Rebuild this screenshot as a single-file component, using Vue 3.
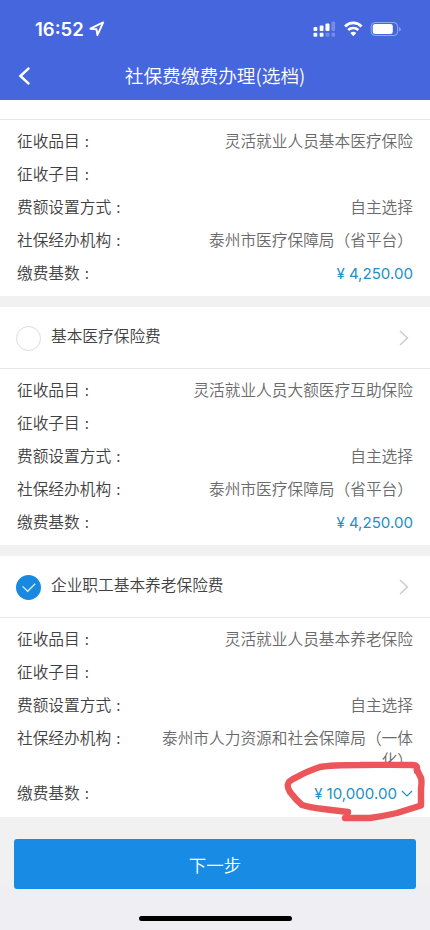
<script setup>
const cards = [
  {
    title: '', checked: false, amount: '4,250.00',
    item: '灵活就业人员基本医疗保险', agency: '泰州市医疗保障局（省平台）'
  },
  {
    title: '基本医疗保险费', checked: false, amount: '4,250.00',
    item: '灵活就业人员大额医疗互助保险', agency: '泰州市医疗保障局（省平台）'
  },
  {
    title: '企业职工基本养老保险费', checked: true, amount: '10,000.00', selectable: true,
    item: '灵活就业人员基本养老保险', agency: '泰州市人力资源和社会保障局（一体化）'
  }
]
</script>

<template>
  <div class="screen">
    <header class="top">
      <div class="status">
        <div class="time">
          <span>16:52</span>
          <svg class="loc" width="16" height="16" viewBox="0 0 16 16"><path d="M1.4 7.7 14.2 1.4 8.4 14.2 7.5 8.3Z" fill="none" stroke="#fff" stroke-width="1.9" stroke-linejoin="round" /></svg>
        </div>
        <svg class="indicators" width="88" height="16" viewBox="0 0 88 16" fill="#fff">
          <rect x="0.5" y="6" width="3.8" height="4" rx="1" />
          <rect x="6.7" y="4.6" width="3.8" height="5.4" rx="1" />
          <rect x="12.5" y="2.6" width="4" height="7.4" rx="1" />
          <rect x="18.5" y="0.6" width="3.6" height="9.4" rx="1" opacity=".25" />
          <rect x="0.5" y="11.8" width="3.8" height="4" rx="1" />
          <rect x="6.7" y="11.8" width="3.8" height="4" rx="1" />
          <rect x="12.5" y="11.8" width="4" height="4" rx="1" opacity=".25" />
          <rect x="18.5" y="11.8" width="3.6" height="4" rx="1" opacity=".25" />
          <g transform="translate(.9 0)">
            <path d="M31.2 5.4a11.5 11.5 0 0 1 16.4 0" fill="none" stroke="#fff" stroke-width="2.8" />
            <path d="M34.3 9a7.2 7.2 0 0 1 10.2 0" fill="none" stroke="#fff" stroke-width="2.5" />
            <path d="M36.4 12.1a4.4 4.4 0 0 1 6 0L39.4 15.2Z" />
          </g>
          <g transform="translate(.8 .5)">
            <rect x="57.4" y="1" width="26.4" height="13" rx="3.8" fill="none" stroke="#fff" stroke-opacity=".45" />
            <rect x="59" y="2.5" width="20" height="10" rx="2.2" />
            <path d="M85.3 5.5v4.4a2.3 2.3 0 0 0 0-4.4Z" opacity=".45" />
          </g>
        </svg>
      </div>
      <div class="nav">
        <svg class="back" width="14" height="20" viewBox="0 0 14 20"><path d="M11.2 1.8 2.4 10l8.8 8.2" fill="none" stroke="#fff" stroke-width="2.5" /></svg>
        <h1>社保费缴费办理(选档)</h1>
      </div>
    </header>

    <main>
      <section v-for="(c, i) in cards" :key="i" class="card">
        <div class="head" :class="{ cut: !c.title }">
          <template v-if="c.title">
            <span class="check" :class="{ on: c.checked }">
              <svg v-if="c.checked" width="24" height="24" viewBox="0 0 24 24"><path d="m5.5 11.4 5.2 4.9 7.5-7.5" fill="none" stroke="#d9f1ff" stroke-width="1.3" /></svg>
            </span>
            <span class="title">{{ c.title }}</span>
            <svg class="arrow" width="10" height="16" viewBox="0 0 10 16"><path d="m1 1 7.5 7L1 15" fill="none" stroke="#ccc" stroke-width="1.5" /></svg>
          </template>
        </div>
        <div class="rows">
          <div class="row"><span class="label">征收品目<i>:</i></span><span class="value">{{ c.item }}</span></div>
          <div class="row"><span class="label">征收子目<i>:</i></span></div>
          <div class="row"><span class="label">费额设置方式<i>:</i></span><span class="value">自主选择</span></div>
          <div class="row"><span class="label">社保经办机构<i>:</i></span><span class="value">{{ c.agency }}</span></div>
          <div class="row">
            <span class="label">缴费基数<i>:</i></span>
            <span class="value money">
              <span class="yen">¥</span><span>{{ c.amount }}</span>
              <svg v-if="c.selectable" class="down" width="12" height="8" viewBox="0 0 12 8"><path d="m1 1 5 5 5-5" fill="none" stroke="#248fc2" stroke-width="1.2" /></svg>
            </span>
            <svg v-if="c.selectable" class="mark" width="150" height="64" viewBox="0 0 150 64" fill="none" stroke="#ec5559" stroke-width="6.4" stroke-linecap="round" stroke-linejoin="round">
              <path d="M138 10 138 7Q138 4 133 4C110 4 98 3.6 81 4C66 4 52 4 41 6C32 9 25 12 18 16Q9 20 9 23Q8 26 11 31Q17 39 23 44C29 46 36 47 44 48L69 51" />
              <path d="M66 57H91Q105 55 118 52L142 44.5V28Q143 20 142 17L138 9" />
            </svg>
          </div>
        </div>
      </section>
    </main>

    <footer class="bottom">
      <button>下一步</button>
      <div class="home"></div>
    </footer>
  </div>
</template>

<style>
body { margin: 0; background: #eeeef3; }
</style>

<style scoped>
.screen { box-sizing: border-box; width: 430px; height: 930px; overflow: hidden; display: flex; flex-direction: column; background: #f1f1f2; font-family: "Noto Sans CJK SC", sans-serif; color: #414141; }
.top { height: 100px; background: #4666de; color: #fff; flex: none; }
.status { height: 52px; padding: 5px 29px 0 35px; box-sizing: border-box; display: flex; align-items: center; justify-content: space-between; }
.time { display: flex; align-items: center; gap: 5px; font: 600 18.5px/24px Inter, sans-serif; }
.indicators { margin-top: 0; }
.nav { height: 48px; display: grid; grid-template-columns: 60px 1fr 60px; align-items: center; }
.back { margin-left: 18px; }
h1 { margin: -2px 0 0; text-align: center; font-size: 18.7px; line-height: 28px; font-weight: 350; white-space: nowrap; }
.card { background: #fff; margin-bottom: 11px; }
.card:last-child { margin-bottom: 0; }
.head { height: 62px; box-sizing: border-box; border-bottom: 1px solid #e8e8e8; padding: 0 21px 0 16px; display: flex; align-items: center; }
.head.cut { height: 20px; }
.check { width: 25px; height: 25px; box-sizing: border-box; border: 1px solid #ddd; border-radius: 50%; margin-top: 1px; display: flex; align-items: center; justify-content: center; }
.check.on { border: 0; background: #1989e0; }
.title { margin-left: 10px; flex: 1; font-size: 15.7px; line-height: 24px; font-weight: 350; margin-top: -3px; }
.arrow { margin-top: 1px; }
.rows { padding: 5px 17px 6px; }
.card:last-child .rows { padding-bottom: 7px; }
.row { display: flex; justify-content: space-between; font-size: 15.7px; line-height: 22px; padding: 5px 0 6px; min-height: 22px; position: relative; }
.label { white-space: nowrap; font-weight: 350; }
.label i { font-style: normal; margin-left: 5px; }
.value { width: 252px; text-align: right; color: #6a6a6a; font-weight: 350; }
.money { display: flex; justify-content: flex-end; align-items: center; color: #248fc2; font-family: Inter, sans-serif; font-size: 15.1px; font-weight: 400; padding-top: 1px; height: 22px; box-sizing: border-box; }
.yen { margin-right: 4px; }
.down { margin-left: 4px; }
.mark { position: absolute; right: -16px; top: -16px; }
.bottom { flex: 1; padding: 22px 14px 0; display: flex; flex-direction: column; align-items: center; background: linear-gradient(#f1f1f2 60px, #eeeef3 80px); }
button { width: 402px; height: 50px; border: 0; border-radius: 3px; background: #188be4; color: #fff; font: 350 17.5px/50px "Noto Sans CJK SC", sans-serif; padding: 1px 0 0; }
.home { width: 153px; height: 5px; border-radius: 3px; background: #000; margin-top: 27px; }
</style>
